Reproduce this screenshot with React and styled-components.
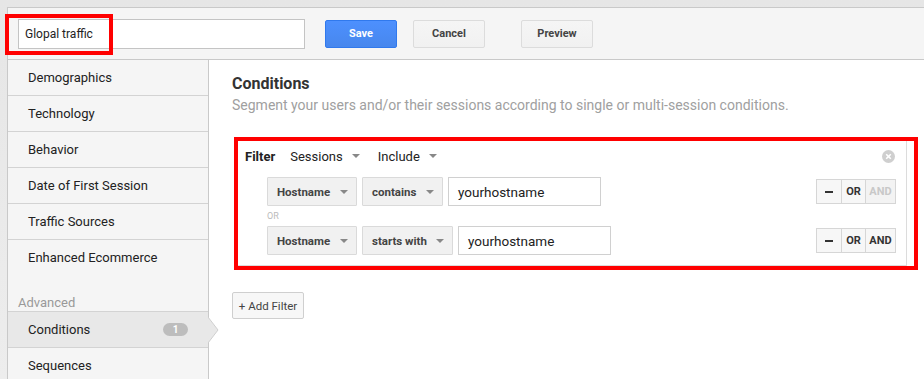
import React from "react";
import styled, { createGlobalStyle } from "styled-components";

const Global = createGlobalStyle`
  html, body { margin: 0; padding: 0; }
  body { font-family: Roboto, "Liberation Sans", Arial, sans-serif; background: #ebebeb; overflow: hidden; }
  * { box-sizing: border-box; }
`;

const Page = styled.div`
  padding: 7px 0 0 7px;
  width: 924px;
  height: 379px;
  background: linear-gradient(#e6e6e6, #ededed);
`;

const Frame = styled.div`
  border-top: 1px solid #c9c9c9;
  border-left: 1px solid #c9c9c9;
  height: 100%;
  display: flex;
  flex-direction: column;
`;

const Header = styled.div`
  height: 52px;
  background: #f5f5f5;
  border-bottom: 1px solid #c9c9c9;
  display: flex;
  align-items: center;
  padding-left: 10px;
`;

const NameWrap = styled.div`
  position: relative;
  margin-right: 20px;
`;

const NameInput = styled.div`
  width: 287px;
  height: 30px;
  background: #fff;
  border: 1px solid #c4c4c4;
  display: flex;
  align-items: center;
  padding-left: 6px;
  font-size: 12px;
  color: #222;
`;

const Annotation = styled.div`
  position: absolute;
  border: 4px solid #ff0000;
  pointer-events: none;
  left: ${(p) => p.$l}px;
  top: ${(p) => p.$t}px;
  width: ${(p) => p.$w}px;
  height: ${(p) => p.$h}px;
`;

const HeadButton = styled.div`
  width: 72px;
  height: 28px;
  border-radius: 2px;
  display: flex;
  align-items: center;
  justify-content: center;
  font-size: 11px;
  font-weight: 700;
  margin-right: ${(p) => p.$mr || 0}px;
  color: ${(p) => (p.$primary ? "#fff" : "#444")};
  background: ${(p) => (p.$primary ? "linear-gradient(#4d90fe, #4787ed)" : "linear-gradient(#f5f5f5, #f1f1f1)")};
  border: 1px solid ${(p) => (p.$primary ? "#3079ed" : "#dcdcdc")};
`;

const Body = styled.div`
  flex: 1;
  display: flex;
  min-height: 0;
`;

const Sidebar = styled.div`
  width: 201px;
  background: #f5f5f5;
  border-right: 1px solid #c9c9c9;
  flex-shrink: 0;
`;

const NavItem = styled.div`
  position: relative;
  height: ${(p) => (p.$noBorder ? 35 : 36)}px;
  display: flex;
  align-items: center;
  padding: 0 20px;
  font-size: 13px;
  color: #222;
  border-bottom: ${(p) => (p.$noBorder ? "none" : "1px solid #d3d3d3")};
  background: ${(p) => (p.$active ? "#e8e8e8" : "transparent")};
`;

const SectionLabel = styled.div`
  height: 37px;
  display: flex;
  align-items: flex-end;
  padding-left: 10px;
  font-size: 13px;
  color: #999;
  border-bottom: 1px solid #d3d3d3;
  line-height: 16px;
`;

const Badge = styled.span`
  margin-left: auto;
  margin-right: 0;
  width: 25px;
  height: 13px;
  border-radius: 7px;
  background: #bdbdbd;
  color: #fff;
  font-size: 10px;
  font-weight: 700;
  display: flex;
  align-items: center;
  justify-content: center;
`;

const Pointer = styled.svg`
  position: absolute;
  right: -11px;
  top: 5px;
`;

const Main = styled.div`
  flex: 1;
  background: #fff;
  padding: 14px 6px 0 23px;
`;

const Title = styled.div`
  font-size: 16px;
  font-weight: 700;
  color: #333;
  line-height: 20px;
`;

const Subtitle = styled.div`
  margin-top: 1px;
  font-size: 14px;
  color: #a0a0a0;
  line-height: 20px;
`;

const FilterWrap = styled.div`
  position: relative;
  margin: 23px 0 0 4px;
  width: 671px;
`;

const FilterBox = styled.div`
  border: 1px solid #dcdcdc;
  padding: 0 10px 10px 8px;
`;

const FilterHead = styled.div`
  height: 34px;
  display: flex;
  align-items: center;
  font-size: 13px;
  color: #222;
`;

const FilterLabel = styled.span`
  font-weight: 700;
  margin-right: 15px;
`;

const Picker = styled.span`
  display: inline-flex;
  align-items: center;
  margin-right: 18px;
  gap: 9px;
`;

const Caret = styled.span`
  width: 0;
  height: 0;
  border-left: 4px solid transparent;
  border-right: 4px solid transparent;
  border-top: 4px solid #888;
`;

const CloseIcon = styled.svg`
  margin-left: auto;
  margin-right: 1px;
`;

const Conditions = styled.div`
  margin-top: 4px;
  padding-left: 22px;
`;

const Row = styled.div`
  display: flex;
  align-items: center;
  height: 29px;
`;

const Select = styled.div`
  width: ${(p) => p.$w}px;
  height: 29px;
  margin-right: 5px;
  background: #f1f1f1;
  border: 1px solid #dadada;
  border-radius: 1px;
  display: flex;
  align-items: center;
  justify-content: space-between;
  padding: 0 8px 0 9px;
  font-size: 11.5px;
  font-weight: 700;
  color: #444;
`;

const TextField = styled.div`
  width: 153px;
  height: 29px;
  border: 1px solid #d0d0d0;
  display: flex;
  align-items: center;
  padding-left: 9px;
  font-size: 13.5px;
  color: #222;
`;

const OrLabel = styled.div`
  height: 20px;
  display: flex;
  align-items: center;
  font-size: 9px;
  color: #bbb;
`;

const Toggles = styled.div`
  margin-left: auto;
  display: flex;
  height: 25px;
`;

const Toggle = styled.div`
  width: ${(p) => p.$w}px;
  height: 25px;
  border: 1px solid #d6d6d6;
  margin-left: -1px;
  background: ${(p) => (p.$off ? "#f3f3f3" : "#f7f7f7")};
  color: ${(p) => (p.$off ? "#c8c8c8" : "#333")};
  font-size: 11px;
  font-weight: 700;
  display: flex;
  align-items: center;
  justify-content: center;
`;

const Dash = styled.span`
  width: 8px;
  height: 2px;
  background: #333;
`;

const AddButton = styled.div`
  margin-top: 26px;
  width: 72px;
  height: 27px;
  border: 1px solid #cfcfcf;
  border-radius: 2px;
  background: #f7f7f7;
  display: flex;
  align-items: center;
  justify-content: center;
  font-size: 11.5px;
  color: #444;
`;

const navItems = [
  "Demographics",
  "Technology",
  "Behavior",
  "Date of First Session",
  "Traffic Sources",
];

function ConditionRow({ op, opWidth, andOff }) {
  return (
    <Row>
      <Select $w={90}>
        Hostname <Caret />
      </Select>
      <Select $w={opWidth}>
        {op} <Caret />
      </Select>
      <TextField>yourhostname</TextField>
      <Toggles>
        <Toggle $w={26}>
          <Dash />
        </Toggle>
        <Toggle $w={25}>OR</Toggle>
        <Toggle $w={31} $off={andOff}>AND</Toggle>
      </Toggles>
    </Row>
  );
}

export default function App() {
  return (
    <>
      <Global />
      <Page>
        <Frame>
          <Header>
            <NameWrap>
              <NameInput>Glopal traffic</NameInput>
              <Annotation $l={-13} $t={-5} $w={108} $h={41} />
            </NameWrap>
            <HeadButton $primary $mr={16}>Save</HeadButton>
            <HeadButton $mr={36}>Cancel</HeadButton>
            <HeadButton>Preview</HeadButton>
          </Header>
          <Body>
            <Sidebar>
              {navItems.map((n) => (
                <NavItem key={n}>{n}</NavItem>
              ))}
              <NavItem $noBorder>Enhanced Ecommerce</NavItem>
              <SectionLabel>Advanced</SectionLabel>
              <NavItem $active>
                Conditions
                <Badge>1</Badge>
                <Pointer width="11" height="26" viewBox="0 0 11 26">
                  <path d="M0 0 L10 13 L0 26 Z" fill="#e8e8e8" />
                  <path d="M0 0 L10 13 L0 26" fill="none" stroke="#cfcfcf" strokeWidth="1" />
                </Pointer>
              </NavItem>
              <NavItem>Sequences</NavItem>
            </Sidebar>
            <Main>
              <Title>Conditions</Title>
              <Subtitle>
                Segment your users and/or their sessions according to single or multi-session conditions.
              </Subtitle>
              <FilterWrap>
                <FilterBox>
                  <FilterHead>
                    <FilterLabel>Filter</FilterLabel>
                    <Picker>
                      Sessions <Caret />
                    </Picker>
                    <Picker>
                      Include <Caret />
                    </Picker>
                    <CloseIcon width="13" height="13" viewBox="0 0 13 13">
                      <circle cx="6.5" cy="6.5" r="6.5" fill="#cfcfcf" />
                      <path d="M4.2 4.2 L8.8 8.8 M8.8 4.2 L4.2 8.8" stroke="#fff" strokeWidth="1.6" />
                    </CloseIcon>
                  </FilterHead>
                  <Conditions>
                    <ConditionRow op="contains" opWidth={81} andOff />
                    <OrLabel>OR</OrLabel>
                    <ConditionRow op="starts with" opWidth={91} />
                  </Conditions>
                </FilterBox>
                <Annotation $l={-2} $t={-1} $w={684} $h={133} />
              </FilterWrap>
              <AddButton>+ Add Filter</AddButton>
            </Main>
          </Body>
        </Frame>
      </Page>
    </>
  );
}
